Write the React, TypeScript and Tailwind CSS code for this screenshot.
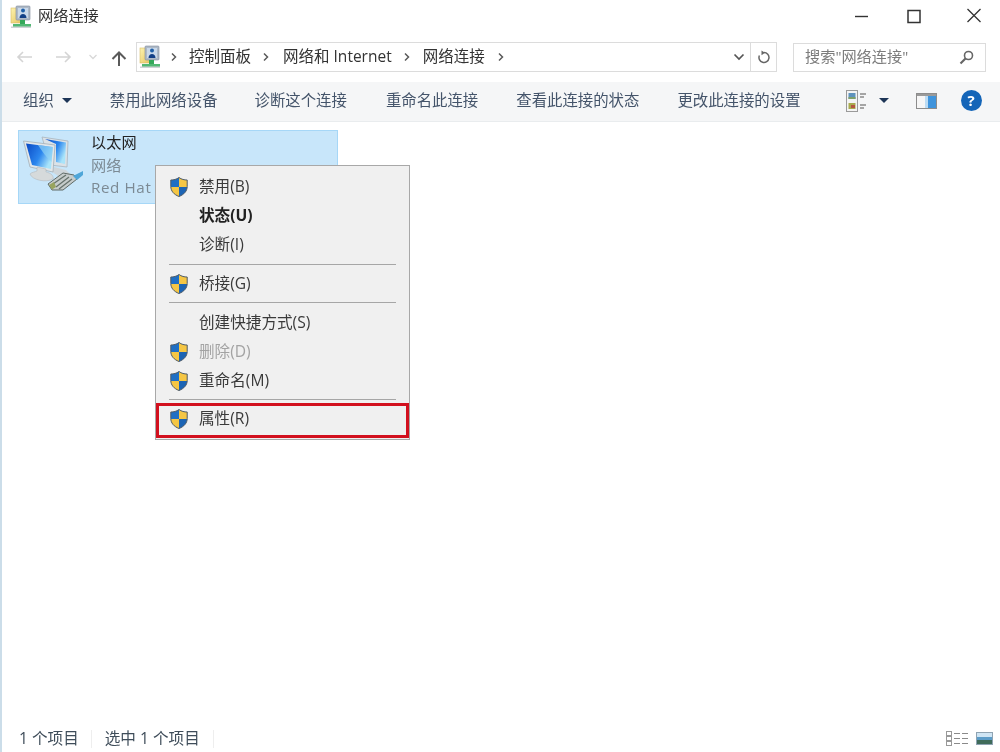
import React from "react";

const FONT = '"Open Sans","Noto Sans CJK SC",sans-serif';

function NetFolder({ id }: { id: string }) {
  return (
    <svg width="22" height="24" viewBox="0 0 22 24" className="shrink-0">
      <defs>
        <linearGradient id={id} x1="0" y1="0" x2="1" y2="1">
          <stop offset="0" stopColor="#fdf3b0" />
          <stop offset="1" stopColor="#e6c45c" />
        </linearGradient>
      </defs>
      <rect x="1" y="3" width="11" height="15" fill={`url(#${id})`} stroke="#d8bd68" strokeWidth="0.6" />
      <rect x="6" y="1" width="14" height="14" rx="1" fill="#aeb9c6" stroke="#7f8c9c" strokeWidth="0.6" />
      <rect x="8" y="3" width="10" height="10" fill="#c9d8ea" />
      <circle cx="13" cy="5.5" r="2" fill="#1f5fa8" />
      <path d="M9.5 13 C9.5 7.5 16.5 7.5 16.5 13 Z" fill="#123f86" />
      <rect x="10" y="15" width="5" height="4" fill="#35a85a" />
      <rect x="3" y="19" width="18" height="3" fill="#52b874" />
      <rect x="1" y="21.5" width="20" height="1.5" fill="#cfd3d6" />
    </svg>
  );
}

function Shield({ id }: { id: string }) {
  const d = "M10 1.5 C7.5 3.4 4.7 4 1.8 4 V10.5 C1.8 15 5 18.6 10 20.5 C15 18.6 18.2 15 18.2 10.5 V4 C15.3 4 12.5 3.4 10 1.5 Z";
  return (
    <svg width="20" height="22" viewBox="0 0 20 22" className="shrink-0">
      <defs>
        <clipPath id={id}>
          <path d={d} />
        </clipPath>
      </defs>
      <g clipPath={`url(#${id})`}>
        <rect x="0" y="0" width="10" height="11" fill="#1f6fc4" />
        <rect x="10" y="0" width="10" height="11" fill="#f5c644" />
        <rect x="0" y="11" width="10" height="11" fill="#f5c644" />
        <rect x="10" y="11" width="10" height="11" fill="#1c64b4" />
      </g>
      <path d={d} fill="none" stroke="#4d5a66" strokeWidth="1" />
    </svg>
  );
}

function Ethernet() {
  return (
    <svg width="64" height="62" viewBox="0 0 64 62" className="shrink-0">
      <defs>
        <linearGradient id="scr" x1="0" y1="0" x2="1" y2="0.5">
          <stop offset="0" stopColor="#0a49c4" />
          <stop offset="0.6" stopColor="#2b86ee" />
          <stop offset="1" stopColor="#a9e4fa" />
        </linearGradient>
      </defs>
      {/* back monitor */}
      <path d="M20 3 L46 7 L45 33 L28 31 Z" fill="#dbe2e7" stroke="#a8b4bd" strokeWidth="0.8" />
      <path d="M23 5 L44 8.5 L43 30 L34 28 L34 10 Z" fill="url(#scr)" />
      <path d="M32 33 L44 36 L48 40 L38 43 L30 38 Z" fill="#cfd6da" />
      {/* front monitor */}
      <path d="M1.5 7 L33 11 L31 38 L8 33 Z" fill="#e2e7ea" stroke="#a5b0b8" strokeWidth="0.8" />
      <path d="M4 9.5 L30.8 13 L29 35 L10 31 Z" fill="url(#scr)" />
      <path d="M16 11 L30.8 13 L29.5 28 C24 23 20 17 16 11 Z" fill="#8fd2f5" opacity="0.7" />
      <path d="M15 33 L24 35 L24 38 C29 39 32 42 31 45 C24 49 10 46 8 40 C10 38 13 38 15 37 Z" fill="#d6dadb" stroke="#b5bbbe" strokeWidth="0.6" />
      {/* connector */}
      <path d="M26 50 L41 39 L52 41 L55 45 L41 56 L30 56 Z" fill="#c6cccb" stroke="#5f6a66" strokeWidth="1" />
      <path d="M31 50 L44 41 M34 53 L47 43 M37 55 L50 45" stroke="#66726c" strokeWidth="1.3" />
      <path d="M27 51 L32 48 L34 53 L30 55.5 Z" fill="#98a45e" />
      <path d="M51 42 L61 37 L61 41 L55 46 Z" fill="#4fa6d8" />
    </svg>
  );
}

function MenuRow({ shield, children, bold, gray, id }: { shield?: boolean; children: React.ReactNode; bold?: boolean; gray?: boolean; id: string }) {
  return (
    <div className="flex h-[29px] items-center pl-[13px]">
      <div className="flex w-[30px] shrink-0 items-center">{shield && <Shield id={id} />}</div>
      <span className={`text-[15.6px] leading-none ${bold ? "font-bold text-[#222]" : gray ? "text-[#a3a3a3]" : "text-[#3a3a3a]"}`}>{children}</span>
    </div>
  );
}

function Sep({ className }: { className: string }) {
  return <div className={`mx-[13px] h-px bg-[#a6a6a6] ${className}`} />;
}

function Caret() {
  return <div className="h-0 w-0 border-x-[5px] border-t-[5px] border-x-transparent border-t-[#1d3557]" />;
}

function Chevron() {
  return (
    <svg width="8" height="10" viewBox="0 0 8 10" className="shrink-0">
      <path d="M2 1.5 L5.5 5 L2 8.5" fill="none" stroke="#5a5a5a" strokeWidth="1.5" />
    </svg>
  );
}

function ViewIcon() {
  return (
    <svg width="20" height="22" viewBox="0 0 20 22">
      <rect x="0.5" y="0.5" width="11" height="21" fill="#f4f4f4" stroke="#9a9a9a" />
      <rect x="2.5" y="3" width="7" height="6" fill="#5f93bd" />
      <rect x="2.5" y="7" width="7" height="2" fill="#7fa06a" />
      <rect x="2.5" y="13" width="7" height="6" fill="#a8ab4e" />
      <rect x="5" y="15" width="4" height="3" fill="#b4573f" />
      <path d="M14 4 H20 M14 7 H18 M14 15 H20 M14 18 H18" stroke="#8a8a8a" strokeWidth="1.3" />
    </svg>
  );
}

export default function App() {
  return (
    <div className="relative flex h-[752px] w-[1000px] flex-col overflow-hidden border-l-2 border-[#cbdde9] bg-white blur-[0.35px]" style={{ fontFamily: FONT }}>
      {/* title bar */}
      <div className="flex h-[34px] items-start pl-[8px] pt-[5px]">
        <NetFolder id="f1" />
        <span className="ml-[6px] text-[15.2px] leading-[20px] text-[#303030]">网络连接</span>
        <div className="ml-auto flex items-center">
          <svg width="16" height="22" viewBox="0 0 16 22" className="mr-[36px]">
            <path d="M1 11.5 H14" stroke="#333" strokeWidth="1.4" />
          </svg>
          <svg width="16" height="22" viewBox="0 0 16 22" className="mr-[44px]">
            <rect x="2" y="5.5" width="12" height="12" fill="none" stroke="#333" strokeWidth="1.5" />
          </svg>
          <svg width="16" height="22" viewBox="0 0 16 22" className="mr-[18px]">
            <path d="M1.5 4 L14.5 17 M14.5 4 L1.5 17" stroke="#333" strokeWidth="1.3" />
          </svg>
        </div>
      </div>

      {/* nav row */}
      <div className="mt-[8px] flex h-[30px] items-center">
        <svg width="18" height="14" viewBox="0 0 18 14" className="ml-[14px]">
          <path d="M16 7 H2 M7 2 L2 7 L7 12" fill="none" stroke="#d4d4d4" strokeWidth="1.6" />
        </svg>
        <svg width="18" height="14" viewBox="0 0 18 14" className="ml-[20px]">
          <path d="M2 7 H16 M11 2 L16 7 L11 12" fill="none" stroke="#d4d4d4" strokeWidth="1.6" />
        </svg>
        <svg width="10" height="8" viewBox="0 0 10 8" className="ml-[16px]">
          <path d="M1.5 2 L5 5.5 L8.5 2" fill="none" stroke="#d8d8d8" strokeWidth="1.3" />
        </svg>
        <svg width="16" height="17" viewBox="0 0 16 17" className="ml-[13px] mt-[2px]">
          <path d="M8 16 V2.5 M1.5 9 L8 2.5 L14.5 9" fill="none" stroke="#5a5a5a" strokeWidth="2" />
        </svg>
        <div className="ml-[9px] flex h-[30px] w-[641px] items-center border border-[#dcdcdc]">
          <div className="ml-[2px]"><NetFolder id="f2" /></div>
          <div className="ml-[9px]"><Chevron /></div>
          <span className="ml-[11px] text-[15.5px] leading-none text-[#333]">控制面板</span>
          <div className="ml-[11px]"><Chevron /></div>
          <span className="ml-[13px] text-[15.5px] leading-none text-[#333]">网络和 Internet</span>
          <div className="ml-[11px]"><Chevron /></div>
          <span className="ml-[12px] text-[15.5px] leading-none text-[#333]">网络连接</span>
          <div className="ml-[12px]"><Chevron /></div>
          <svg width="12" height="8" viewBox="0 0 12 8" className="ml-auto mr-[5px]">
            <path d="M1.5 1.5 L6 6 L10.5 1.5" fill="none" stroke="#555" strokeWidth="1.7" />
          </svg>
          <div className="flex h-full w-[26px] items-center justify-center border-l border-[#dcdcdc]">
            <svg width="14" height="15" viewBox="0 0 14 15">
              <path d="M7 2.5 A5 5 0 1 1 2.4 5.5" fill="none" stroke="#666" strokeWidth="1.5" />
              <path d="M4.5 0.5 L8 2.7 L4.5 5.2 Z" fill="#666" />
            </svg>
          </div>
        </div>
        <div className="ml-[16px] flex h-[29px] w-[193px] items-center border border-[#dcdcdc] pl-[11px] pr-[11px]">
          <span className="text-[15.2px] leading-none text-[#7c7c7c]">搜索"网络连接"</span>
          <svg width="15" height="15" viewBox="0 0 15 15" className="ml-auto">
            <circle cx="9.5" cy="5.5" r="4" fill="none" stroke="#666" strokeWidth="1.6" />
            <path d="M6.5 8.5 L1.5 13.5" stroke="#666" strokeWidth="2.2" />
          </svg>
        </div>
      </div>

      {/* toolbar */}
      <div className="mt-[10px] flex h-[40px] items-center border-b border-[#e9ecee] bg-[#f5f6f7] pb-[2px] pl-[21px] text-[15.4px] leading-none text-[#44546a]">
        <span>组织</span>
        <div className="ml-[8px]"><Caret /></div>
        <span className="ml-[38px]">禁用此网络设备</span>
        <span className="ml-[37px]">诊断这个连接</span>
        <span className="ml-[39px]">重命名此连接</span>
        <span className="ml-[38px]">查看此连接的状态</span>
        <span className="ml-[38px]">更改此连接的设置</span>
        <div className="ml-[45px]"><ViewIcon /></div>
        <div className="ml-[13px]"><Caret /></div>
        <svg width="21" height="16" viewBox="0 0 21 16" className="ml-[27px]">
          <rect x="0.5" y="0.5" width="20" height="15" fill="#f6f6f6" stroke="#8c8c8c" />
          <rect x="1" y="1" width="19" height="2" fill="#9a9a9a" />
          <rect x="9" y="3" width="3" height="12" fill="#bcdcf4" />
          <rect x="12" y="3" width="8" height="12" fill="#3f94dc" />
        </svg>
        <div className="ml-[24px] flex h-[21px] w-[21px] items-center justify-center rounded-full bg-[#1465b8] text-[15px] font-bold text-white">?</div>
      </div>

      {/* content */}
      <div className="relative flex-1 pl-[16px] pt-[8px]">
        <div className="flex h-[74px] w-[320px] border border-[#a6d7f7] bg-[#c8e6fa]">
          <div className="ml-[3px] mt-[3px]"><Ethernet /></div>
          <div className="ml-[5px] flex flex-col text-[15.2px] leading-[22.5px]">
            <span className="text-[#222]">以太网</span>
            <span className="text-[#7c8a94]">网络</span>
            <span className="tracking-[0.6px] text-[#7c8a94]">Red Hat</span>
          </div>
        </div>

        {/* context menu */}
        <div className="absolute left-[153px] top-[43px] w-[255px] border border-[#a8a8a8] bg-[#f0f0f0] pt-[6px]">
          <MenuRow shield id="s1">禁用(B)</MenuRow>
          <MenuRow bold id="s2">状态(U)</MenuRow>
          <MenuRow id="s3">诊断(I)</MenuRow>
          <Sep className="mt-[5px] mb-[4px]" />
          <MenuRow shield id="s4">桥接(G)</MenuRow>
          <Sep className="mt-[4px] mb-[5px]" />
          <MenuRow id="s5">创建快捷方式(S)</MenuRow>
          <MenuRow shield gray id="s6">删除(D)</MenuRow>
          <MenuRow shield id="s7">重命名(M)</MenuRow>
          <Sep className="mt-[4px] mb-[4px]" />
          <MenuRow shield id="s8">属性(R)</MenuRow>
          <div className="h-[6px]" />
          {/* red highlight */}
          <div className="absolute left-0 top-[237px] h-[35px] w-[253px] border-[3px] border-[#d2101e]" />
        </div>
      </div>

      {/* status bar */}
      <div className="flex h-[29px] items-center pl-[17px] pt-[2px] text-[15.6px] leading-none text-[#3f4d5a]">
        <span>1 个项目</span>
        <div className="ml-[12px] h-[18px] w-px bg-[#eeeeee]" />
        <span className="ml-[13px]">选中 1 个项目</span>
        <div className="ml-[13px] h-[18px] w-px bg-[#eeeeee]" />
        <svg width="22" height="15" viewBox="0 0 22 15" className="ml-auto">
          <rect x="0.5" y="0.5" width="5" height="4" fill="#fff" stroke="#999" />
          <rect x="0.5" y="5.5" width="5" height="4" fill="#fff" stroke="#999" />
          <rect x="0.5" y="10.5" width="5" height="4" fill="#fff" stroke="#999" />
          <path d="M8 2.5 H14 M16 2.5 H22 M8 7.5 H14 M16 7.5 H22 M8 12.5 H14 M16 12.5 H22" stroke="#8a8a8a" />
        </svg>
        <div className="ml-[8px] mr-[7px] flex h-[13px] w-[17px] flex-col border border-[#8fa3b2] bg-[#5f9fd0]">
          <div className="h-[4px] bg-[#cfe5f4]" />
          <div className="h-[3px] bg-[#5c9cc8]" />
          <div className="flex-1 bg-[#3f6b5a]" />
        </div>
      </div>
    </div>
  );
}
